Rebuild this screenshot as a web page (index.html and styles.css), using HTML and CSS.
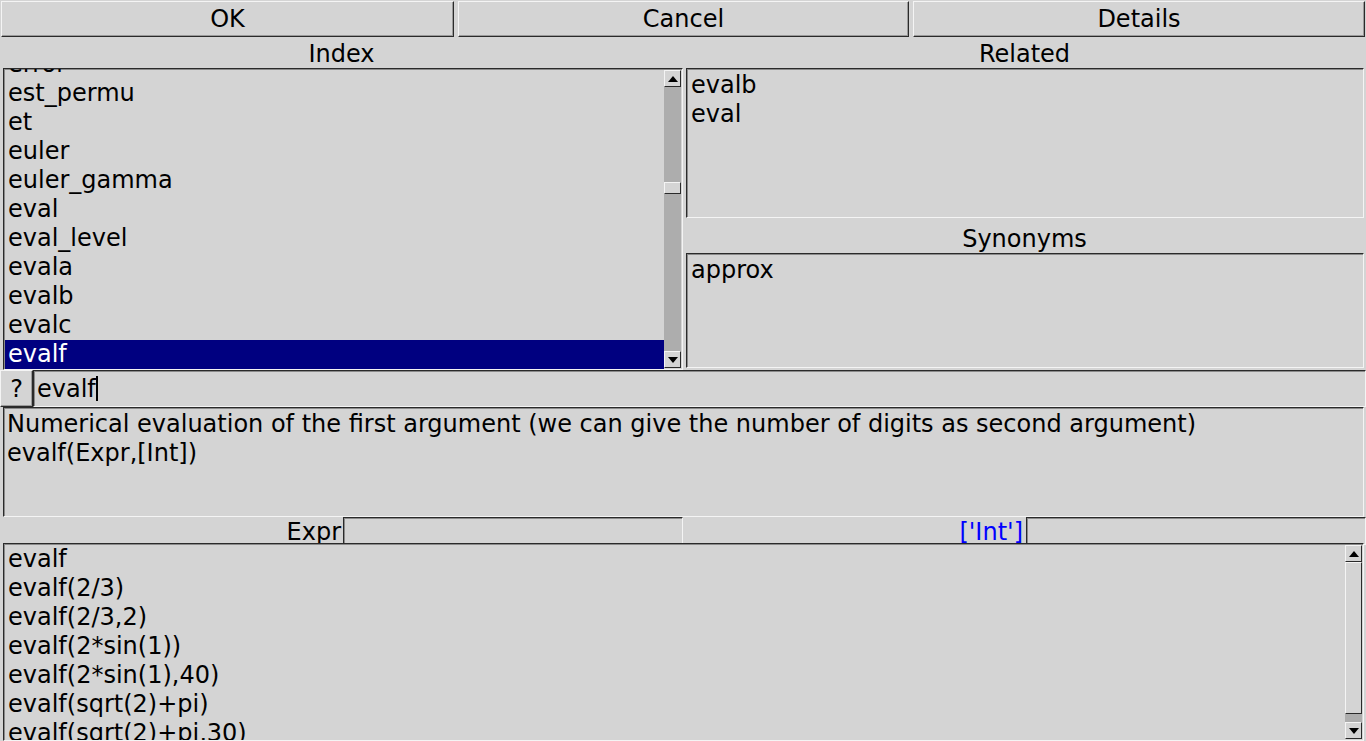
FILE: index.html
```html
<!DOCTYPE html>
<html>
<head>
<meta charset="utf-8">
<link rel="stylesheet" href="styles.css">
</head>
<body>
<div class="app">
  <div class="buttons">
    <div class="btn">OK</div>
    <div class="btn">Cancel</div>
    <div class="btn">Details</div>
  </div>
  <div class="main">
    <div class="leftcol">
      <div class="label">Index</div>
      <div class="listbox indexbox">
        <div class="items index-items">
          <div class="item">error</div>
          <div class="item">est_permu</div>
          <div class="item">et</div>
          <div class="item">euler</div>
          <div class="item">euler_gamma</div>
          <div class="item">eval</div>
          <div class="item">eval_level</div>
          <div class="item">evala</div>
          <div class="item">evalb</div>
          <div class="item">evalc</div>
          <div class="item selected">evalf</div>
        </div>
        <div class="vscroll small">
          <div class="arrow up"><span class="tri-up"></span></div>
          <div class="track">
            <div class="spacer top-space"></div>
            <div class="thumb small-thumb"></div>
          </div>
          <div class="arrow down"><span class="tri-down"></span></div>
        </div>
      </div>
    </div>
    <div class="rightcol">
      <div class="label">Related</div>
      <div class="listbox relbox">
        <div class="items side-items">
          <div class="item">evalb</div>
          <div class="item">eval</div>
        </div>
      </div>
      <div class="label">Synonyms</div>
      <div class="listbox synbox">
        <div class="items side-items">
          <div class="item">approx</div>
        </div>
      </div>
    </div>
  </div>
  <div class="searchrow">
    <div class="btn qbtn">?</div>
    <div class="input searchinput"><span>evalf</span><span class="cursor"></span></div>
  </div>
  <div class="desc">
    <div>Numerical evaluation of the first argument (we can give the number of digits as second argument)</div>
    <div>evalf(Expr,[Int])</div>
  </div>
  <div class="argsrow">
    <div class="arg">
      <div class="arglabel">Expr</div>
      <div class="input arginput"></div>
    </div>
    <div class="arg">
      <div class="arglabel blue">['Int']</div>
      <div class="input arginput"></div>
    </div>
  </div>
  <div class="listbox exbox">
    <div class="items ex-items">
      <div class="item">evalf</div>
      <div class="item">evalf(2/3)</div>
      <div class="item">evalf(2/3,2)</div>
      <div class="item">evalf(2*sin(1))</div>
      <div class="item">evalf(2*sin(1),40)</div>
      <div class="item">evalf(sqrt(2)+pi)</div>
      <div class="item">evalf(sqrt(2)+pi,30)</div>
    </div>
    <div class="vscroll big">
      <div class="arrow up"><span class="tri-up"></span></div>
      <div class="track">
        <div class="thumb big-thumb"></div>
      </div>
      <div class="arrow down"><span class="tri-down"></span></div>
    </div>
  </div>
</div>
</body>
</html>
```

FILE: styles.css
```css
* { box-sizing: border-box; }
html, body {
  margin: 0;
  padding: 0;
  background: #d4d4d4;
}
body {
  font-family: "DejaVu Sans", sans-serif;
  font-size: 24px;
  color: #000;
  width: 1366px;
  height: 741px;
  overflow: hidden;
}
.app {
  display: flex;
  flex-direction: column;
  height: 741px;
}
.buttons {
  display: grid;
  grid-template-columns: 453px 451px 452px;
  column-gap: 4px;
  padding: 1px 0 0 1px;
  height: 37px;
}
.btn {
  height: 36px;
  display: flex;
  align-items: center;
  justify-content: center;
  background: #d4d4d4;
  border: 1px solid;
  border-color: #f4f4f4 #2a2a2a #2a2a2a #f4f4f4;
  box-shadow: inset -1px -1px 0 #9a9a9a;
  line-height: 1;
}
.main {
  display: flex;
  height: 333px;
}
.leftcol {
  width: 683px;
  display: flex;
  flex-direction: column;
}
.rightcol {
  width: 683px;
  display: flex;
  flex-direction: column;
}
.label {
  height: 31px;
  text-align: center;
  line-height: 35px;
}
.listbox {
  position: relative;
  display: flex;
  border: 1px solid;
  border-color: #2a2a2a #f4f4f4 #f4f4f4 #2a2a2a;
  box-shadow: inset 1px 1px 0 #8a8a8a;
  overflow: hidden;
  background: #d4d4d4;
}
.items {
  flex: 1;
  padding: 1px 0 0 1px;
  overflow: hidden;
}
.side-items {
  padding-top: 2px;
}
.item {
  height: 29px;
  line-height: 29px;
  padding-left: 3px;
  white-space: nowrap;
}
.item.selected {
  background: #000080;
  color: #fff;
}
.indexbox {
  margin-left: 3px;
  width: 680px;
  height: 302px;
}
.index-items {
  margin-top: -20px;
}
.relbox {
  margin-left: 3px;
  width: 678px;
  height: 150px;
}
.rightcol .label + .listbox + .label {
  height: 35px;
  line-height: 42px;
}
.synbox {
  margin-left: 3px;
  width: 678px;
  height: 115px;
}
.vscroll {
  width: 17px;
  display: flex;
  flex-direction: column;
  background: #adadad;
  margin: 1px 1px 1px 0;
}
.arrow {
  height: 17px;
  background: #d4d4d4;
  border: 1px solid;
  border-color: #f4f4f4 #2a2a2a #2a2a2a #f4f4f4;
  display: flex;
  align-items: center;
  justify-content: center;
}
.tri-up {
  width: 0; height: 0;
  border-left: 5px solid transparent;
  border-right: 5px solid transparent;
  border-bottom: 6px solid #000;
}
.tri-down {
  width: 0; height: 0;
  border-left: 5px solid transparent;
  border-right: 5px solid transparent;
  border-top: 6px solid #000;
}
.track {
  flex: 1;
  display: flex;
  flex-direction: column;
}
.top-space {
  height: 95px;
}
.thumb {
  background: #d4d4d4;
  border: 1px solid;
  border-color: #f4f4f4 #2a2a2a #2a2a2a #f4f4f4;
}
.small-thumb {
  height: 12px;
}
.big-thumb {
  height: 152px;
}
.searchrow {
  display: flex;
  height: 37px;
  padding-top: 0;
}
.qbtn {
  width: 33px;
  height: 37px;
}
.input {
  background: #d4d4d4;
  border: 1px solid;
  border-color: #2a2a2a #f4f4f4 #f4f4f4 #2a2a2a;
  box-shadow: inset 1px 1px 0 #8a8a8a;
}
.searchinput {
  flex: 1;
  height: 37px;
  display: flex;
  align-items: center;
  padding-left: 3px;
}
.cursor {
  display: inline-block;
  width: 2px;
  height: 25px;
  background: #000;
  margin-left: 0;
}
.desc {
  margin-left: 3px;
  width: 1361px;
  height: 110px;
  border: 1px solid;
  border-color: #2a2a2a #f4f4f4 #f4f4f4 #2a2a2a;
  box-shadow: inset 1px 1px 0 #8a8a8a;
  padding: 2px 0 0 3px;
  line-height: 29px;
  white-space: nowrap;
}
.argsrow {
  display: flex;
  height: 26px;
  margin-top: 0;
}
.arg {
  width: 683px;
  display: flex;
}
.arglabel {
  flex: 1;
  text-align: right;
  padding-right: 2px;
  line-height: 30px;
  height: 26px;
  overflow: hidden;
}
.arglabel.blue {
  color: #0000ff;
  padding-right: 3px;
}
.arginput {
  width: 340px;
  height: 28px;
}
.exbox {
  margin-left: 3px;
  width: 1361px;
  height: 198px;
}
.ex-items {
  padding-top: 1px;
}
```
